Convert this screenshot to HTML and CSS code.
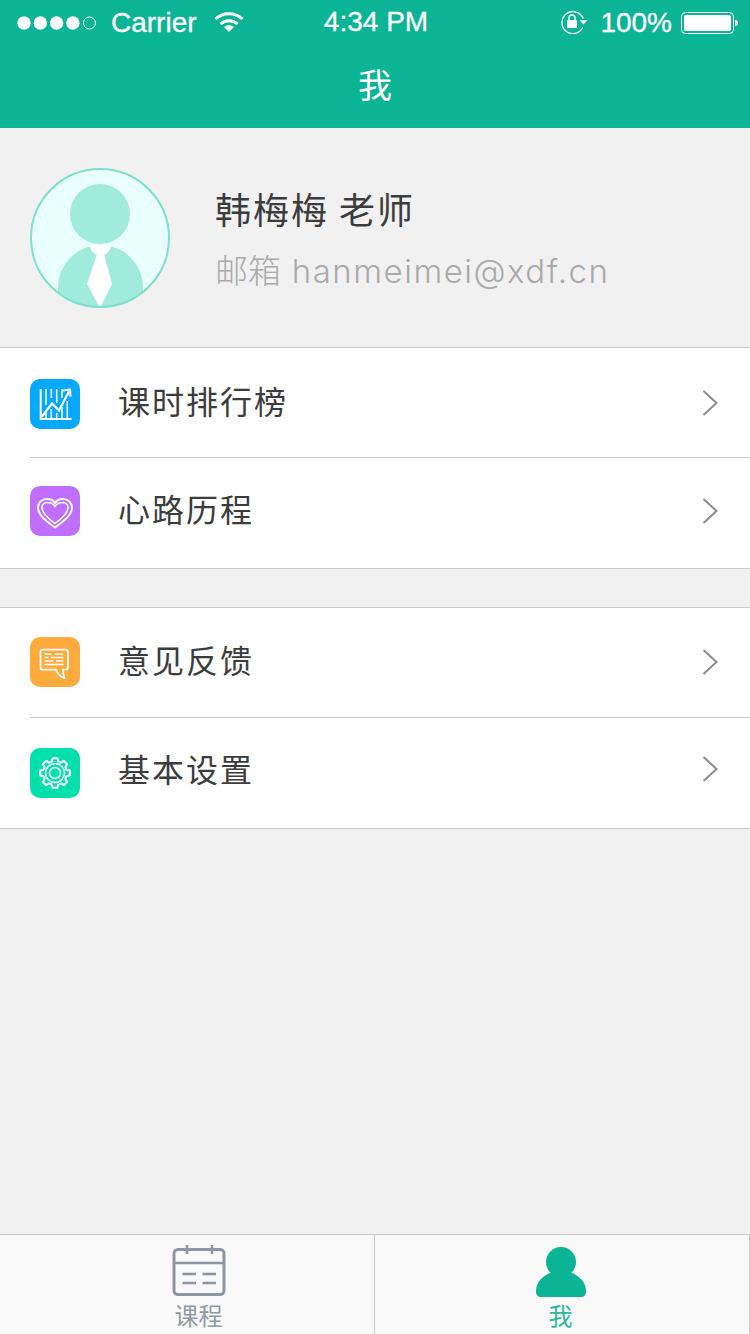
FILE: index.html
```html
<!DOCTYPE html>
<html lang="zh">
<head>
<meta charset="utf-8">
<title>我</title>
<link rel="stylesheet" href="styles.css">
</head>
<body>
<div class="page">
  <header class="header">
    <div class="status">
      <div class="status-left">
        <svg class="signal" width="82" height="16" viewBox="0 0 82 16"><circle cx="7" cy="8" r="6.7" fill="#fff"/><circle cx="23.3" cy="8" r="6.7" fill="#fff"/><circle cx="39.6" cy="8" r="6.7" fill="#fff"/><circle cx="55.9" cy="8" r="6.7" fill="#fff"/><circle cx="72.5" cy="8" r="6" fill="none" stroke="#fff" stroke-width="1"/></svg>
        <span class="carrier">Carrier</span>
        <svg class="wifi" width="30" height="22" viewBox="0 0 30 22"><path d="M1.500 8C9 1 21 1 28.500 8" fill="none" stroke="#fff" stroke-width="3"/><path d="M6.500 13c4.800-4.300 12.200-4.300 17 0" fill="none" stroke="#fff" stroke-width="3"/><path d="M15 21l-5-5c3-2.400 7-2.400 10 0z" fill="#fff"/></svg>
      </div>
      <div class="time">4:34 PM</div>
      <div class="status-right">
        <svg class="lock" width="28" height="24" viewBox="0 0 28 24"><path d="M22.800 17.500A11 11 0 1 1 23.200 8.500" fill="none" stroke="#fff" stroke-width="1.300"/><path d="M19.500 10h8l-4 4.500z" fill="#fff"/><rect x="7" y="10" width="10" height="8" rx="1" fill="#fff"/><path d="M9 10V8a3 3 0 0 1 6 0v2" fill="none" stroke="#fff" stroke-width="1.400"/></svg>
        <span class="percent">100%</span>
        <svg class="battery" width="58" height="24" viewBox="0 0 58 24"><rect x=".5" y="1.500" width="52" height="21" rx="4" fill="none" stroke="#fff"/><rect x="3" y="4" width="47" height="16" rx="2" fill="#fff"/><path d="M54 9c2 0 3 1 3 3s-1 3-3 3z" fill="#fff"/></svg>
      </div>
    </div>
    <h1 class="title">我</h1>
  </header>

  <main class="main">
    <section class="profile">
      <svg class="avatar" width="140" height="140" viewBox="0 0 140 140">
        <defs><clipPath id="avatar-clip"><circle cx="70" cy="70" r="69"/></clipPath></defs>
        <circle cx="70" cy="70" r="69" fill="#e9fffb"/>
        <g clip-path="url(#avatar-clip)">
          <circle cx="70" cy="46" r="30" fill="#a0ebdc"/>
          <path d="M28 140V119.500a42.500 42.500 0 0 1 85 0V140z" fill="#a0ebdc"/>
          <path d="M60 77h21a10.500 10.500 0 0 1-21 0z" fill="#fff"/>
          <path d="M67 86h7l8 30-12 24-13-24z" fill="#fff"/>
        </g>
        <circle cx="70" cy="70" r="69" fill="none" stroke="#7de0cc" stroke-width="2"/>
      </svg>
      <div class="profile-text">
        <div class="name">韩梅梅 老师</div>
        <div class="email"><span class="email-label">邮箱</span> hanmeimei@xdf.cn</div>
      </div>
    </section>

    <section class="group">
      <a class="row row-a">
        <svg class="icon" width="50" height="50" viewBox="0 0 50 50"><rect width="50" height="50" rx="10" fill="#03a8ff"/><g fill="none" stroke="#fff" stroke-width="1.500"><path d="M10.700 10v30H41.500" stroke-width="2"/><path d="M16 10v16M16 33v6M21.300 10v9M21.300 30v9M26.700 10v14M26.700 34v5M32 10v9M32 28v11M37.300 22v17"/><path d="M11.500 38l10.500-13.500 7 7 10-19" stroke-width="2.200"/><path d="M33 11.500l7-1 .5 7" stroke-width="2.200"/></g></svg>
        <span class="label">课时排行榜</span>
        <svg class="chevron" width="16" height="26" viewBox="0 0 16 26"><path d="M1.500 1l13 12-13 12" fill="none" stroke="#8c8c8c" stroke-width="2"/></svg>
      </a>
      <div class="divider"></div>
      <a class="row row-b">
        <svg class="icon" width="50" height="50" viewBox="0 0 50 50"><rect width="50" height="50" rx="10" fill="#bf6eff"/><g fill="none" stroke="#fff" stroke-width="2"><path d="M25 41.500C16 35 8 29 8 21.500c0-5 4-8.500 9-8.500 3.500 0 6.500 1.500 8 4 1.500-2.500 4.500-4 8-4 5 0 9 3.500 9 8.500C42 29 34 35 25 41.500z"/><path d="M25 37.500C18 32.500 12 27.500 12 21.500c0-3 2.500-5 5.500-5 3 0 6 1.500 7.500 4 1.500-2.500 4.500-4 7.500-4 3 0 5.500 2 5.500 5 0 6-6 11-13 16z" stroke-width="1.500"/></g></svg>
        <span class="label">心路历程</span>
        <svg class="chevron" width="16" height="26" viewBox="0 0 16 26"><path d="M1.500 1l13 12-13 12" fill="none" stroke="#8c8c8c" stroke-width="2"/></svg>
      </a>
    </section>

    <section class="group group-second">
      <a class="row row-c">
        <svg class="icon" width="50" height="50" viewBox="0 0 50 50"><rect width="50" height="50" rx="10" fill="#ffab3c"/><g fill="none" stroke="#fff"><path d="M13 12.700h22.500a2.500 2.500 0 0 1 2.500 2.500v15a2.500 2.500 0 0 1-2.500 2.500H33c0 3 .3 6 1.500 8.500-3.500-1-7-4.500-8.500-8.500H13a2.500 2.500 0 0 1-2.500-2.500v-15a2.500 2.500 0 0 1 2.500-2.500z" stroke-width="1.800" stroke-linejoin="round"/><path d="M14.500 17h7M24.500 17h9M14.500 20.500h4M21 20.500h12.500M14.500 24h9M26 24h7.500M14.500 27.500h19" stroke-width="1.300"/></g></svg>
        <span class="label">意见反馈</span>
        <svg class="chevron" width="16" height="26" viewBox="0 0 16 26"><path d="M1.500 1l13 12-13 12" fill="none" stroke="#8c8c8c" stroke-width="2"/></svg>
      </a>
      <div class="divider"></div>
      <a class="row row-d">
        <svg class="icon" width="50" height="50" viewBox="0 0 50 50"><rect width="50" height="50" rx="10" fill="#03e0ab"/><g fill="none" stroke="#fff" stroke-linejoin="round"><path d="M21.900 13.400L22.600 10.200H27.400L28.100 13.400L31 14.600L33.800 12.800L37.200 16.200L35.400 19L36.600 21.900L39.800 22.600V27.400L36.600 28.100L35.400 31L37.200 33.800L33.800 37.200L31 35.400L28.100 36.600L27.400 39.800H22.600L21.900 36.600L19 35.400L16.200 37.200L12.800 33.800L14.600 31L13.400 28.100L10.200 27.400V22.600L13.400 21.900L14.600 19L12.800 16.200L16.200 12.800L19 14.600z" stroke-width="2"/><circle cx="25" cy="25" r="9.500" stroke-width="1.500"/><circle cx="25" cy="25" r="5.500" stroke-width="1.500"/></g></svg>
        <span class="label">基本设置</span>
        <svg class="chevron" width="16" height="26" viewBox="0 0 16 26"><path d="M1.500 1l13 12-13 12" fill="none" stroke="#8c8c8c" stroke-width="2"/></svg>
      </a>
    </section>
  </main>

  <nav class="tabbar">
    <a class="tab tab-course">
      <svg class="tab-icon" width="54" height="52" viewBox="0 0 54 52"><g fill="none" stroke="#8e95a2"><rect x="2" y="4.500" width="50" height="45" rx="4" stroke-width="3"/><path d="M2 18h50" stroke-width="2.500"/><path d="M15 0v9M40 0v9" stroke-width="2.500"/><path d="M10.500 29h13.500M30.500 29h13.500M10.500 38h13.500M30.500 38h13.500" stroke-width="2.500"/></g></svg>
      <span class="tab-label">课程</span>
    </a>
    <a class="tab tab-active">
      <svg class="tab-icon" width="54" height="52" viewBox="0 0 54 52"><g fill="#0bb495"><circle cx="27" cy="17" r="15"/><path d="M19 27C9 30 2 37 2 46c0 4 2 6 5 6h40c3 0 5-2 5-6 0-9-7-16-17-19z"/></g></svg>
      <span class="tab-label">我</span>
    </a>
  </nav>
</div>
</body>
</html>
```

FILE: styles.css
```css
* { box-sizing: border-box; margin: 0; padding: 0; }

html, body { width: 750px; height: 1334px; overflow: hidden; }

body {
  font-family: "Liberation Sans", "Noto Sans CJK SC", sans-serif;
  background: #f1f1f1;
}

.page {
  display: flex;
  flex-direction: column;
  height: 1334px;
}

.header {
  height: 128px;
  background: #0bb495;
  color: #fff;
  flex: none;
}

.status {
  height: 46px;
  display: grid;
  grid-template-columns: 1fr auto 1fr;
  align-items: center;
  font-size: 28px;
  padding: 0 11px 0 17px;
  -webkit-text-stroke: 0.3px #fff;
}

.status-left, .status-right { display: flex; align-items: center; }
.status-right { justify-content: flex-end; }

.carrier { margin-left: 12px; }
.wifi { margin-left: 17px; margin-top: -2px; }
.time { margin-right: 4px; margin-top: -2px; }
.lock { margin-right: 12px; margin-top: -2px; }
.percent { margin-right: 9px; }

.title {
  height: 82px;
  padding-top: 14px;
  text-align: center;
  font-size: 34px;
  line-height: 48px;
  font-weight: 400;
  font-family: "Noto Sans CJK SC", sans-serif;
}

.main { flex: 1; }

.profile {
  height: 219px;
  padding: 40px 0 0 30px;
  display: flex;
  align-items: flex-start;
  gap: 45px;
}

.profile-text { padding-top: 14px; }

.name {
  font-family: "Noto Sans CJK SC", sans-serif;
  font-size: 36px;
  line-height: 52px;
  letter-spacing: 2px;
  color: #3c3c3c;
}

.email {
  margin-top: 10px;
  font-family: "Inter", "Noto Sans CJK SC", sans-serif;
  font-weight: 300;
  font-size: 33px;
  letter-spacing: 1.500px;
  line-height: 50px;
  color: #aaa;
}

.email-label {
  font-family: "Noto Sans CJK SC", sans-serif;
  font-size: 33px;
  letter-spacing: 0;
}

.group {
  background: #fff;
  border-top: 1px solid #c8c8c8;
  border-bottom: 1px solid #c8c8c8;
}

.group-second { margin-top: 38px; }

.divider {
  height: 1px;
  margin-left: 30px;
  background: #c8c8c8;
}

.row {
  display: flex;
  align-items: center;
  padding-left: 30px;
  padding-right: 32px;
}

.row-a { padding-top: 31px; padding-bottom: 28px; }
.row-b { padding-top: 28px; padding-bottom: 32px; }
.row-c { padding-top: 29px; padding-bottom: 30px; }
.row-d { padding-top: 30px; padding-bottom: 30px; }

.icon { flex: none; }

.label {
  flex: 1;
  margin-left: 38px;
  margin-top: -7px;
  font-family: "Noto Sans CJK SC", sans-serif;
  font-size: 32px;
  line-height: 46px;
  letter-spacing: 2px;
  color: #3c3c3c;
}

.row-a .label { margin-top: -9px; }
.row-d .label { margin-top: -11px; }

.chevron { flex: none; }

.row-a .chevron { margin-top: -3px; }
.row-d .chevron { margin-top: -8px; }

.tabbar {
  height: 100px;
  flex: none;
  display: flex;
  background: #f9f9f9;
  border-top: 1px solid #c8c8c8;
}

.tab {
  width: 375px;
  display: flex;
  flex-direction: column;
  align-items: center;
  padding-top: 10px;
  border-right: 1px solid #c8c8c8;
  color: #8f9ba3;
}

.tab-course { padding-left: 23px; }
.tab-active { color: #2fb79b; padding-right: 3px; }

.tab-icon { flex: none; }

.tab-label {
  font-family: "Noto Sans CJK SC", sans-serif;
  font-size: 24px;
  line-height: 34px;
  margin-top: 1px;
}
```
